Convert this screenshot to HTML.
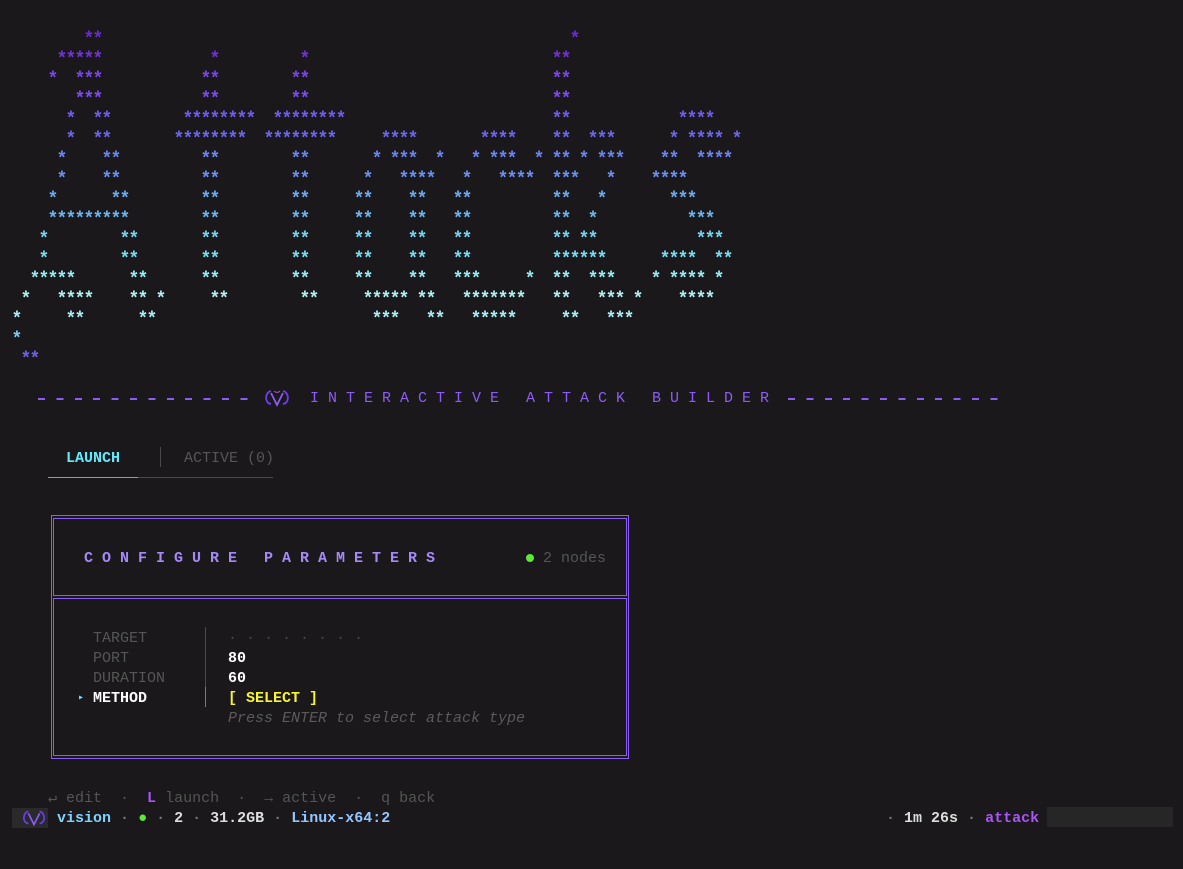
<!DOCTYPE html>
<html><head><meta charset="utf-8"><style>
html,body{margin:0;padding:0;background:#1a181b;width:1183px;height:869px;overflow:hidden}
body{position:relative;font-family:"Liberation Mono","DejaVu Sans Mono",monospace;font-size:15px;line-height:20px;color:#ccc}
.a{position:absolute;white-space:pre;margin:0}
pre.art{position:absolute;left:11.5px;top:30px;margin:0;font:bold 18px/20px "Liberation Mono",monospace;letter-spacing:-1.8px}
pre.art span{display:block;height:20px}
.dash{position:absolute;height:2px;top:398px;width:210px;background:repeating-linear-gradient(90deg,#8b5cf6 0 7px,transparent 7px 18.4px)}
.b{font-weight:bold}
</style></head><body>
<pre class="art"><span style="color:#6d28d9">        **                                                    *</span><span style="color:#7230e0">     *****            *         *                           **</span><span style="color:#7a45ef">    *  ***           **        **                           **</span><span style="color:#7a4cf2">       ***           **        **                           **</span><span style="color:#6f5cf2">      *  **        ********  ********                       **            ****</span><span style="color:#6a66f0">      *  **       ********  ********     ****       ****    **  ***      * **** *</span><span style="color:#6a84f2">     *    **         **        **       * ***  *   * ***  * ** * ***    **  ****</span><span style="color:#6a90f2">     *    **         **        **      *   ****   *   ****  ***   *    ****</span><span style="color:#6aaaf0">    *      **        **        **     **    **   **         **   *       ***</span><span style="color:#6ab4ef">    *********        **        **     **    **   **         **  *          ***</span><span style="color:#74d4f0">   *        **       **        **     **    **   **         ** **           ***</span><span style="color:#78dcf0">   *        **       **        **     **    **   **         ******      ****  **</span><span style="color:#98e8f0">  *****      **      **        **     **    **   ***     *  **  ***    * **** *</span><span style="color:#b0eef0"> *   ****    ** *     **        **     ***** **   *******   **   *** *    ****</span><span style="color:#a8ecf2">*     **      **                        ***   **   *****     **   ***</span><span style="color:#7cc8f4">*</span><span style="color:#6a60f0"> **</span></pre>

<div class="dash" style="left:38px"></div>
<svg class="a" style="left:262px;top:388px" width="30" height="20" viewBox="0 0 30 20">
<path d="M9 3 C3 4 2 15 9 16" fill="none" stroke="#6d3cf0" stroke-width="1.8"/>
<path d="M21 3 C27 4 28 15 21 16" fill="none" stroke="#6d3cf0" stroke-width="1.8"/>
<path d="M9 5 L15 17 L21 5" fill="none" stroke="#8b5cf6" stroke-width="1.8"/>
<path d="M12 3 C14 5 16 5 18 3" fill="none" stroke="#a04cd0" stroke-width="1.2"/>
</svg>
<div class="a" style="left:310px;top:389px;color:#8b5cf6;letter-spacing:9px">INTERACTIVE ATTACK BUILDER</div>
<div class="dash" style="left:788px"></div>

<div class="a b" style="left:66px;top:449px;color:#67e8f9">LAUNCH</div>
<div class="a" style="left:160px;top:447px;width:1px;height:20px;background:#4a4a4a"></div>
<div class="a" style="left:184px;top:449px;color:#555">ACTIVE (0)</div>
<div class="a" style="left:48px;top:477px;width:90px;height:1px;background:#9b87f5"></div>
<div class="a" style="left:138px;top:477px;width:135px;height:1px;background:#4a4a4a"></div>

<div class="a" style="left:51px;top:515px;width:576px;height:242px;border:1px solid #8b5cf6"></div>
<div class="a" style="left:53px;top:518px;width:572px;height:76px;border:1px solid #8b5cf6"></div>
<div class="a" style="left:53px;top:598px;width:572px;height:156px;border:1px solid #8b5cf6"></div>

<div class="a b" style="left:84px;top:549px;color:#a58af7;letter-spacing:9px">CONFIGURE PARAMETERS</div>
<div class="a" style="left:526px;top:554px;width:8px;height:8px;border-radius:50%;background:#5ee83a"></div>
<div class="a" style="left:543px;top:549px;color:#555">2 nodes</div>

<div class="a" style="left:93px;top:629px;color:#555">TARGET</div>
<div class="a" style="left:93px;top:649px;color:#555">PORT</div>
<div class="a" style="left:93px;top:669px;color:#555">DURATION</div>
<div class="a" style="left:78px;top:689px;color:#67e8f9;font-size:10px">▸</div>
<div class="a b" style="left:93px;top:689px;color:#fff">METHOD</div>
<div class="a" style="left:205px;top:627px;width:1px;height:60px;background:#4a4a4a"></div>
<div class="a" style="left:205px;top:687px;width:1px;height:20px;background:#8b5cf6"></div>
<div class="a" style="left:228px;top:629px;color:#444">· · · · · · · ·</div>
<div class="a b" style="left:228px;top:649px;color:#fff">80</div>
<div class="a b" style="left:228px;top:669px;color:#fff">60</div>
<div class="a b" style="left:228px;top:689px;color:#f5f532">[ SELECT ]</div>
<div class="a" style="left:228px;top:709px;color:#5a5a5a;font-style:italic">Press ENTER to select attack type</div>

<div class="a" style="left:48px;top:789px;color:#555">↵ edit  ·  <b style="color:#a855f7">L</b> launch  ·  → active  ·  q back</div>
<div class="a" style="left:12px;top:808px;width:36px;height:20px;background:#2a2a2a"></div>
<svg class="a" style="left:20px;top:808px" width="28" height="20" viewBox="0 0 30 20">
<path d="M9 3 C3 4 2 15 9 16" fill="none" stroke="#6d3cf0" stroke-width="1.8"/>
<path d="M21 3 C27 4 28 15 21 16" fill="none" stroke="#6d3cf0" stroke-width="1.8"/>
<path d="M9 5 L15 17 L21 5" fill="none" stroke="#8b5cf6" stroke-width="1.8"/>
</svg>
<div class="a b" style="left:57px;top:809px;color:#ddd"><span style="color:#7dd3fc">vision</span> <span style="color:#777">·</span> <span style="color:#5ee83a">●</span> <span style="color:#777">·</span> 2 <span style="color:#777">·</span> 31.2GB <span style="color:#777">·</span> <span style="color:#93c5fd">Linux-x64:2</span></div>
<div class="a b" style="left:886px;top:809px;color:#ddd"><span style="color:#777">·</span> 1m 26s <span style="color:#777">·</span> <span style="color:#a855f7">attack</span></div>
<div class="a" style="left:1047px;top:807px;width:126px;height:20px;background:#262626"></div>
</body></html>
